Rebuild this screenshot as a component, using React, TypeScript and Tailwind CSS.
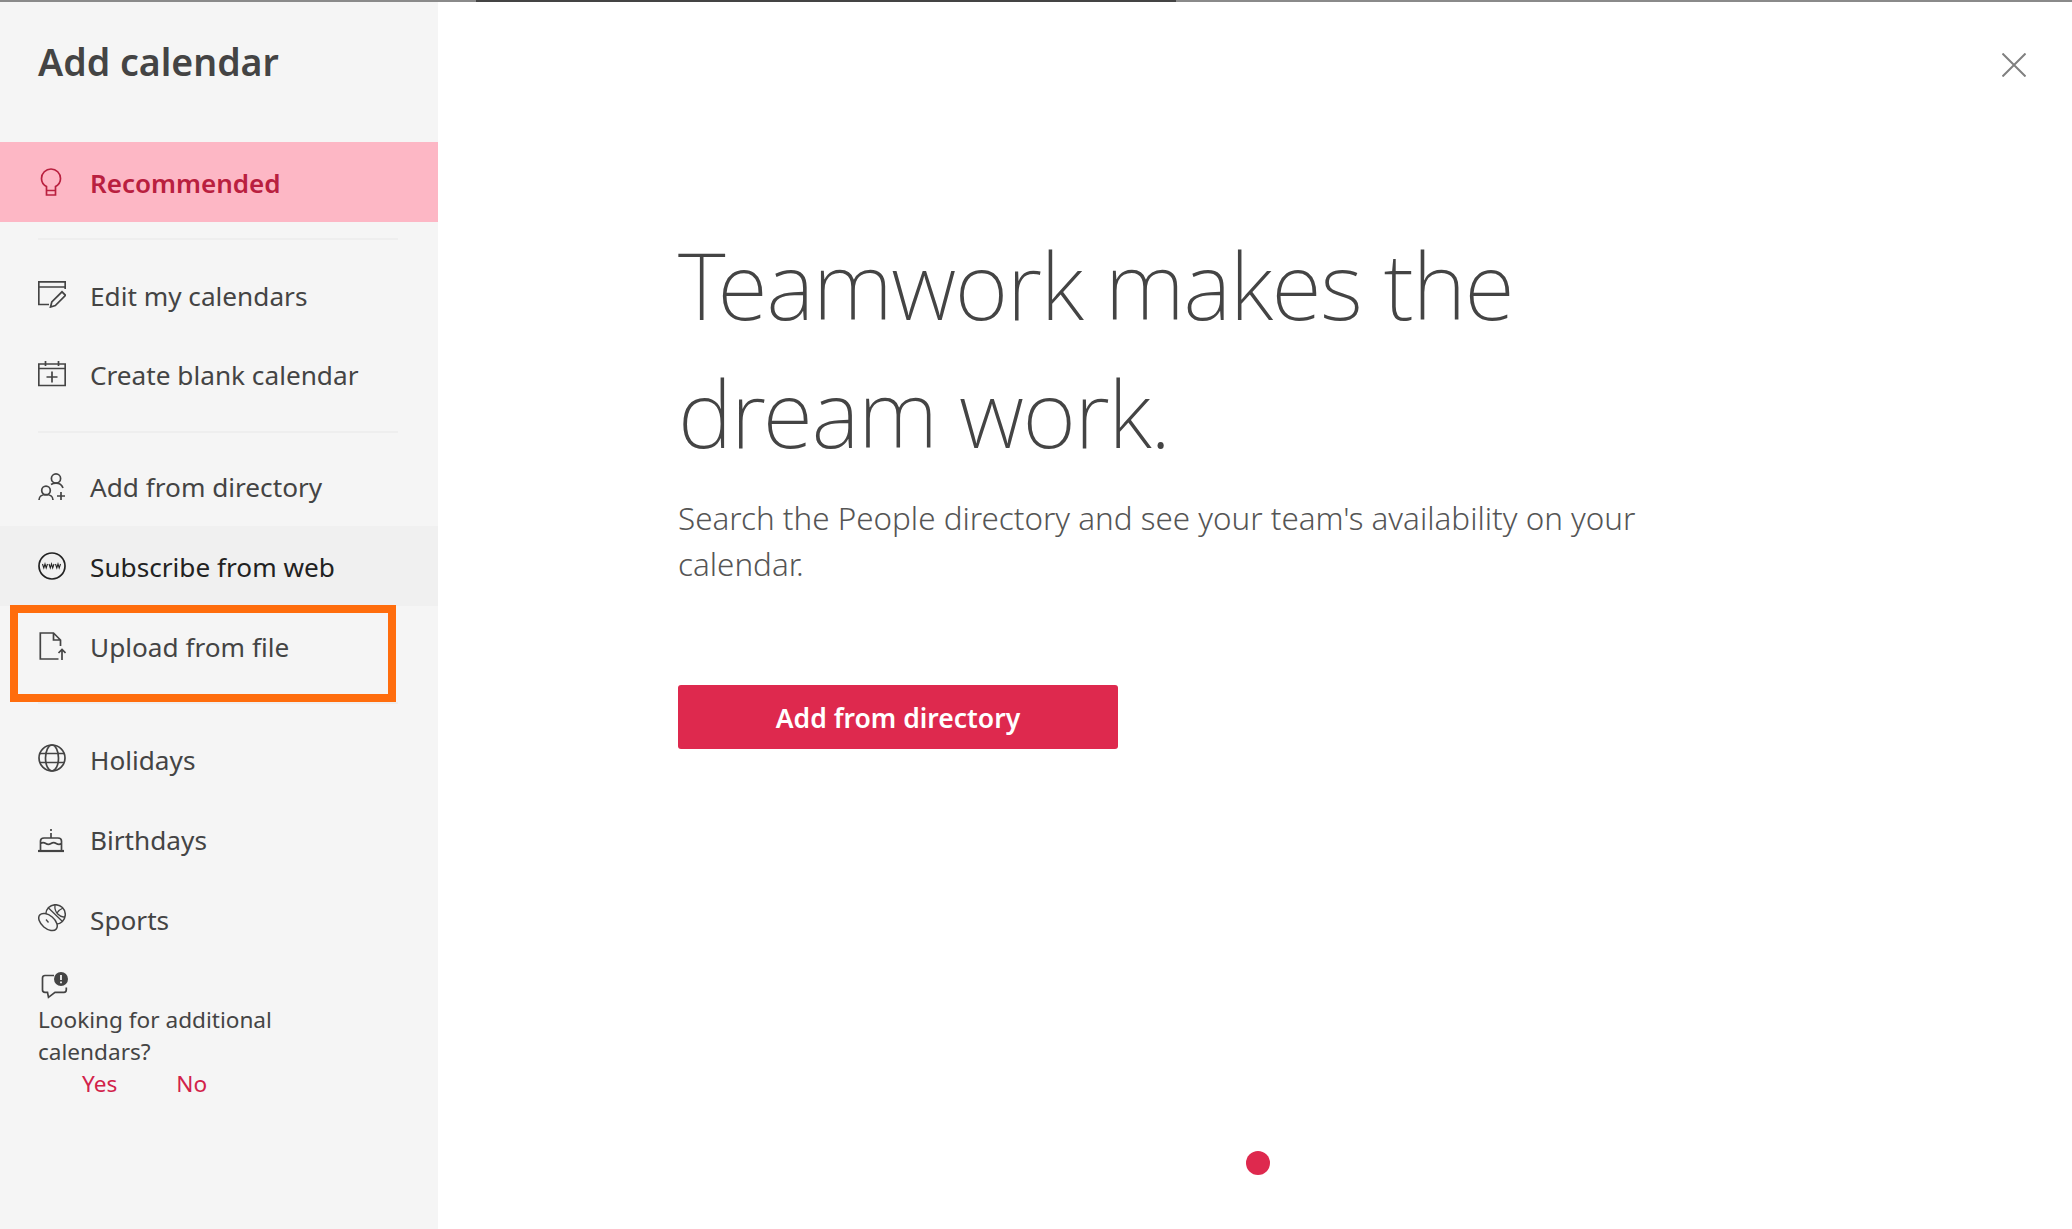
import React from "react";

const font = "font-['Noto_Sans','Open_Sans',sans-serif]";

function Icon({ children, className = "" }: { children: React.ReactNode; className?: string }) {
  return (
    <svg viewBox="0 0 28 28" fill="none" stroke="currentColor" strokeWidth="1.7" className={`w-7 h-7 shrink-0 ${className}`}>
      {children}
    </svg>
  );
}

const Bulb = () => (
  <Icon className="text-[#b9203f]">
    <path d="M8.500 18.500C5.300 16.800 3.500 14 3.500 10.500 3.500 5.200 7.800 1 13 1s9.500 4.200 9.500 9.500c0 3.500-1.800 6.300-5 8V27h-9zM8.500 22.500h9" />
  </Icon>
);
const EditCal = () => (
  <Icon className="mb-1">
    <path d="M11 24.500H.8V1.800h26.400V9M.8 7h26.400" />
    <path d="M12.500 27l1.300-5L24 11.800l3.500 3.500L17.300 25.500z" />
  </Icon>
);
const PlusCal = () => (
  <Icon className="mb-1">
    <path d="M.8 4h26.400v21.500H.8zM.8 8.500h26.400M7.500 1v5M20.500 1v5M14 11.500v11M8.500 17h11" />
  </Icon>
);
const People = () => (
  <Icon>
    <circle cx="18" cy="6.500" r="4.600" />
    <circle cx="8" cy="18.500" r="4.300" />
    <path d="M1 28c0-3.500 3-5.500 7-5.500s7 2 7 5.500M13 12.500c1.200-.8 3-1.400 5-1.400 3.500 0 6 1.800 7 5M23 20v8M19 24h8" />
  </Icon>
);
const Web = () => (
  <Icon className="text-[#222222]">
    <circle cx="14" cy="14" r="13" />
    <path d="M4.500 12l1.300 4 1.200-4 1.200 4 1.300-4M11 12l1.300 4 1.200-4 1.200 4 1.300-4M17.500 12l1.300 4 1.200-4 1.200 4 1.300-4" strokeWidth="1.100" />
  </Icon>
);
const Upload = () => (
  <Icon>
    <path d="M20.500 27H2.300V1h13.200l7 7v6M15.500 1v7h7M24 28V17.500M20.500 21l3.500-3.500 3.500 3.500" />
  </Icon>
);
const Globe = () => (
  <Icon className="mb-1">
    <circle cx="14" cy="14" r="13" />
    <ellipse cx="14" cy="14" rx="6.500" ry="13" />
    <path d="M2 9.500h24M2 18.500h24" />
  </Icon>
);
const Cake = () => (
  <Icon>
    <path d="M0 25h26" strokeWidth="2.200" />
    <path d="M2.500 25V15c0-2 1.500-3 3.500-3h14c2 0 3.500 1 3.500 3v10M2.500 17.500c2-1.500 3-1.500 5.300 0 2 1.300 3.200 1.300 5.200 0s3.200-1.300 5.200 0c2.300 1.500 3.300 1.500 5.300 0M13 12V7M13 5V3" />
  </Icon>
);
const Sports = () => (
  <Icon className="mb-1">
    <circle cx="17.500" cy="10.500" r="9.800" strokeWidth="1.500" />
    <path d="M10 3.500l14.500 14M17 .8c-.5 4 .5 7 3 9.500s5 3 7 2.500M25 4c-2.500 1-4.500 2.500-6 5" strokeWidth="1.300" />
    <ellipse cx="10" cy="18" rx="10.800" ry="6.500" transform="rotate(40 10 18)" fill="#f5f5f5" strokeWidth="1.500" />
    <path d="M8 15.500l2.500 3" strokeWidth="1.300" />
  </Icon>
);
const Feedback = () => (
  <svg viewBox="0 0 28 28" fill="none" className="w-7 h-7 ml-[2px] text-[#444444]">
    <path d="M14 3.500H5C3.500 3.500 2.500 4.500 2.500 6v12c0 1.500 1 2.300 2.500 2.300h2.500l1 5 6.500-5H24c1.500 0 2.300-1 2.300-2.500V15.500" stroke="currentColor" strokeWidth="1.700" />
    <circle cx="21" cy="7" r="7" fill="currentColor" />
    <path d="M21 3v5M21 9.500v1.700" stroke="#f5f5f5" strokeWidth="1.800" />
  </svg>
);

function NavRow({
  icon,
  label,
  className = "text-[#444444]",
  labelClassName = "",
}: {
  icon: React.ReactNode;
  label: string;
  className?: string;
  labelClassName?: string;
}) {
  return (
    <div className={`h-20 flex items-center gap-[24px] pl-[38px] ${className}`}>
      {icon}
      <span className={`text-[26.200px] leading-none whitespace-nowrap ${labelClassName}`}>{label}</span>
    </div>
  );
}

const Divider = () => <div className="h-0.5 ml-[38px] w-[360px] bg-[#eeeeee]" />;

export default function App() {
  return (
    <div className={`relative w-[2072px] h-[1229px] overflow-hidden bg-white flex flex-col ${font}`}>
      {/* progress line along the top edge */}
      <div className="h-0.5 shrink-0 bg-[#8a8a8a]">
        <div className="ml-[476px] w-[700px] h-full bg-[#444444]" />
      </div>

      <div className="flex-1 flex">
        {/* sidebar */}
        <aside className="w-[438px] shrink-0 bg-[#f5f5f5] flex flex-col">
          <h2 className="pl-[38px] pt-[35px] h-[140px] text-[37.500px] leading-[50px] font-semibold text-[#444444]">Add calendar</h2>
          <div className="h-20 flex items-center gap-[24px] pl-[38px] bg-[#fdb7c5] text-[#b9203f]">
            <Bulb />
            <span className="text-[26px] leading-none font-semibold pt-[2px]">Recommended</span>
          </div>
          <div className="h-4" />
          <Divider />
          <div className="h-4" />
          <NavRow icon={<EditCal />} label="Edit my calendars" />
          <NavRow icon={<PlusCal />} label="Create blank calendar" labelClassName="pb-[2px]" />
          <div className="h-[15px]" />
          <Divider />
          <div className="h-[13px]" />
          <NavRow icon={<People />} label="Add from directory" labelClassName="pt-[2px]" />
          <div className="bg-[#f0f0f0]">
            <NavRow icon={<Web />} label="Subscribe from web" className="text-[#222222]" labelClassName="pt-[2px]" />
          </div>
          <NavRow icon={<Upload />} label="Upload from file" labelClassName="pt-[2px]" />
          <div className="h-4" />
          <Divider />
          <div className="h-4" />
          <NavRow icon={<Globe />} label="Holidays" />
          <NavRow icon={<Cake />} label="Birthdays" />
          <NavRow icon={<Sports />} label="Sports" />
          <div className="pl-[38px] pt-3 text-[22.600px] leading-8 text-[#444444]">
            <Feedback />
            <p className="w-[300px] mt-1">Looking for additional calendars?</p>
            <div className="flex text-[#d2224a] pl-[44px] gap-[59px]">
              <span>Yes</span>
              <span>No</span>
            </div>
          </div>
        </aside>

        {/* main panel */}
        <main className="flex-1 flex flex-col">
          <div className="flex justify-end pr-[46px] pt-[51px]">
            <svg viewBox="0 0 24 24" className="w-6 h-6 text-[#808080]" fill="none" stroke="currentColor" strokeWidth="2">
              <path d="M.5.5l23 23M23.500.5l-23 23" />
            </svg>
          </div>
          <div className="pl-[240px] pt-[144px]">
            <h1 className="w-[1000px] text-[92px] leading-[128px] tracking-[-1.450px] font-extralight text-[#444444]">Teamwork makes the dream work.</h1>
            <p className="w-[1000px] mt-[18px] text-[31.400px] leading-[46px] font-light text-[#555555]">
              Search the People directory and see your team's availability on your calendar.
            </p>
            <button className="mt-[98px] w-[440px] h-16 pt-[3px] rounded-[3px] bg-[#de294e] text-white text-[26.500px] font-semibold">Add from directory</button>
          </div>
          <div className="flex justify-center pl-[6px] mt-auto mb-[54px]">
            <div className="w-6 h-6 rounded-full bg-[#de294e]" />
          </div>
        </main>
      </div>

      {/* callout around Upload from file */}
      <div className="absolute left-[10px] top-[605px] w-[386px] h-[97px] border-8 border-[#ff6d0d]" />
    </div>
  );
}
